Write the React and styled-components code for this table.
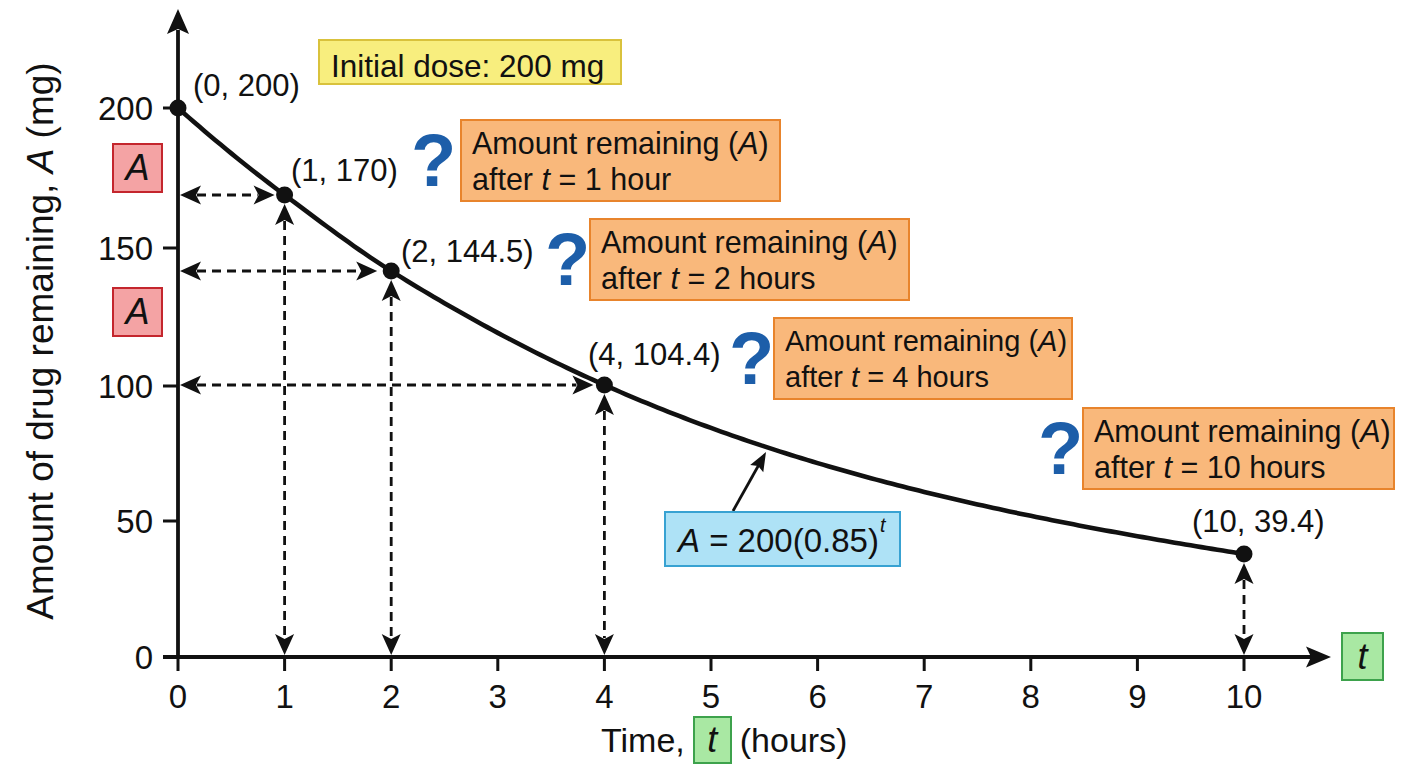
import React from 'react';
import styled, { createGlobalStyle } from 'styled-components';

const Global = createGlobalStyle`
  html, body { margin: 0; padding: 0; background: #ffffff; }
  body { font-family: "Liberation Sans", Arial, sans-serif; color: #111; }
`;

const tones = {
  orange: { bg: '#F9B87B', border: '#E8842C' },
  yellow: { bg: '#F8EE7E', border: '#D9C23C' },
  blue: { bg: '#AEE2F6', border: '#38A2D2' },
  red: { bg: '#F4A3A4', border: '#C4262D' },
  green: { bg: '#A9E8A3', border: '#3DA24C' },
};

const Figure = styled.div`
  position: relative;
  width: 1408px;
  height: 768px;
  overflow: hidden;
  background: #ffffff;
`;

const ChartSvg = styled.svg`
  display: block;
  width: 1408px;
  height: 768px;
  font-family: "Liberation Sans", Arial, sans-serif;
  fill: #111;
`;

const Placed = styled.div`
  position: absolute;
  left: ${(p) => p.$x}px;
  top: ${(p) => p.$y}px;
  display: flex;
  align-items: center;
  gap: ${(p) => p.$gap || 0}px;
`;

const Ask = styled.span`
  display: block;
  width: 40px;
  text-align: center;
  font-family: "Liberation Sans", Arial, sans-serif;
  font-weight: 700;
  font-size: 74px;
  line-height: 1;
  color: #1D5EA9;
`;

const Callout = styled.div`
  box-sizing: border-box;
  width: ${(p) => p.$w}px;
  height: 83px;
  padding: 0 10px;
  display: flex;
  flex-direction: column;
  justify-content: center;
  background: ${tones.orange.bg};
  border: 2px solid ${tones.orange.border};
  font-size: ${(p) => p.$size}px;
  line-height: 36px;
  white-space: nowrap;
  color: #111;
`;

const Badge = styled.div`
  box-sizing: border-box;
  width: ${(p) => p.$w}px;
  height: ${(p) => p.$h}px;
  padding: ${(p) => p.$pad || '0 12px'};
  display: flex;
  align-items: center;
  background: ${(p) => tones[p.$tone].bg};
  border: 2px solid ${(p) => tones[p.$tone].border};
  font-size: ${(p) => p.$size}px;
  white-space: nowrap;
  color: #111;
`;

const VarTag = styled.div`
  box-sizing: border-box;
  width: ${(p) => p.$w}px;
  height: ${(p) => p.$h}px;
  display: flex;
  align-items: center;
  justify-content: center;
  background: ${(p) => tones[p.$tone].bg};
  border: 2px solid ${(p) => tones[p.$tone].border};
  font-style: italic;
  font-size: ${(p) => p.$size}px;
  color: #111;
`;

const Var = styled.i`
  font-style: italic;
`;

const Sup = styled.i`
  font-style: italic;
  font-size: 0.6em;
  position: relative;
  top: -0.8em;
  margin-left: 1px;
`;

const AxisWord = styled.span`
  font-size: 34px;
  color: #111;
  white-space: nowrap;
`;

/* ---------- chart geometry ---------- */
const X = (t) => 178 + 106.6 * t;
const AXIS_Y = 657;
const yTicks = [
  { v: 200, y: 108 },
  { v: 150, y: 248 },
  { v: 100, y: 386 },
  { v: 50, y: 521 },
  { v: 0, y: 657 },
];
const xTicks = [0, 1, 2, 3, 4, 5, 6, 7, 8, 9, 10];

const points = [
  { t: 0, y: 108, label: '(0, 200)', lx: 193, ly: 96 },
  { t: 1, y: 195, label: '(1, 170)', lx: 291, ly: 181 },
  { t: 2, y: 271, label: '(2, 144.5)', lx: 401, ly: 262 },
  { t: 4, y: 385, label: '(4, 104.4)', lx: 588, ly: 365 },
  { t: 10, y: 554, label: '(10, 39.4)', lx: 1192, ly: 532 },
];

// exponential decay in screen space, nudged to pass through the plotted dots
const base = (t) => AXIS_Y - 549 * Math.pow(0.842, t);
const resid = points.map((p) => [p.t, p.y - base(p.t)]);
function correction(t) {
  for (let i = 0; i < resid.length - 1; i++) {
    const [t0, r0] = resid[i];
    const [t1, r1] = resid[i + 1];
    if (t >= t0 && t <= t1) {
      const u = (t - t0) / (t1 - t0);
      const s = u * u * (3 - 2 * u);
      return r0 + (r1 - r0) * s;
    }
  }
  return 0;
}
function curvePath() {
  let d = '';
  for (let i = 0; i <= 200; i++) {
    const t = (i / 200) * 10;
    const x = X(t);
    const y = base(t) + correction(t);
    d += `${i === 0 ? 'M' : 'L'}${x.toFixed(2)},${y.toFixed(2)} `;
  }
  return d;
}

function head(x, y, angle, len = 20, half = 8, notch = 4) {
  const c = Math.cos(angle);
  const s = Math.sin(angle);
  const bx = x - len * c;
  const by = y - len * s;
  const px = -s;
  const py = c;
  const nx = x - (len - notch) * c;
  const ny = y - (len - notch) * s;
  return `M${x},${y} L${bx + half * px},${by + half * py} L${nx},${ny} L${bx - half * px},${by - half * py} Z`;
}

function DashedArrow({ x1, y1, x2, y2 }) {
  const ang = Math.atan2(y2 - y1, x2 - x1);
  const len = 21;
  const c = Math.cos(ang);
  const s = Math.sin(ang);
  return (
    <g>
      <line
        x1={x1 + (len - 4) * c}
        y1={y1 + (len - 4) * s}
        x2={x2 - (len - 4) * c}
        y2={y2 - (len - 4) * s}
        stroke="#111"
        strokeWidth="2.8"
        strokeDasharray="9 6"
      />
      <path d={head(x1, y1, ang + Math.PI, len, 9.5, 5)} fill="#111" />
      <path d={head(x2, y2, ang, len, 9.5, 5)} fill="#111" />
    </g>
  );
}

const hArrows = [
  { y: 195, tip: X(1) - 10 },
  { y: 271, tip: X(2) - 14 },
  { y: 385, tip: X(4) - 11 },
];
const vArrows = [
  { x: X(1), top: 204 },
  { x: X(2), top: 280 },
  { x: X(4), top: 394 },
  { x: X(10), top: 563 },
];

const notes = [
  { qx: 411, bx: 460, y: 119, w: 321, size: 30.5, gap: 9, t: '1 hour' },
  { qx: 545, bx: 589, y: 218, w: 321, size: 30.5, gap: 4, t: '2 hours' },
  { qx: 729, bx: 773, y: 317, w: 300, size: 29, gap: 4, t: '4 hours' },
  { qx: 1038, bx: 1082, y: 407, w: 313, size: 30.5, gap: 4, t: '10 hours' },
];

export default function App() {
  const fA = Math.atan2(452 - 511, 766 - 733);
  return (
    <>
      <Global />
      <Figure>
        <ChartSvg viewBox="0 0 1408 768">
          {/* y-axis title */}
          <text
            transform="translate(53,341) rotate(-90)"
            textAnchor="middle"
            fontSize="37"
          >
            Amount of drug remaining, <tspan fontStyle="italic">A</tspan> (mg)
          </text>

          {/* axes */}
          <line x1="178" y1={AXIS_Y + 1} x2="178" y2="30" stroke="#111" strokeWidth="3.8" />
          <path d={head(178, 9, -Math.PI / 2, 25, 11, 5)} fill="#111" />
          <line x1="163" y1={AXIS_Y} x2="1312" y2={AXIS_Y} stroke="#111" strokeWidth="3.8" />
          <path d={head(1331, AXIS_Y, 0, 25, 10.5, 5)} fill="#111" />

          {/* y ticks */}
          {yTicks.map((tk) => (
            <g key={tk.v}>
              <line x1="163" y1={tk.y} x2="178" y2={tk.y} stroke="#111" strokeWidth="3" />
              <text x="153" y={tk.y + 12} textAnchor="end" fontSize="33">
                {tk.v}
              </text>
            </g>
          ))}

          {/* x ticks */}
          {xTicks.map((t) => (
            <g key={t}>
              <line x1={X(t)} y1={AXIS_Y} x2={X(t)} y2={AXIS_Y + 14} stroke="#111" strokeWidth="3" />
              <text x={X(t)} y="708" textAnchor="middle" fontSize="33">
                {t}
              </text>
            </g>
          ))}

          {/* dashed read-off arrows */}
          {hArrows.map((a) => (
            <DashedArrow key={a.y} x1={180} y1={a.y} x2={a.tip} y2={a.y} />
          ))}
          {vArrows.map((a) => (
            <DashedArrow key={a.x} x1={a.x} y1={a.top} x2={a.x} y2={AXIS_Y - 2} />
          ))}

          {/* decay curve */}
          <path d={curvePath()} fill="none" stroke="#111" strokeWidth="4.6" strokeLinecap="round" strokeLinejoin="round" />

          {/* formula pointer */}
          <line x1="733" y1="511" x2={766 - 14 * Math.cos(fA)} y2={452 - 14 * Math.sin(fA)} stroke="#111" strokeWidth="2.8" />
          <path d={head(766, 452, fA, 19, 7.5, 3)} fill="#111" />

          {/* points */}
          {points.map((p) => (
            <g key={p.t}>
              <circle cx={X(p.t)} cy={p.y} r="8.5" fill="#111" />
              <text x={p.lx} y={p.ly} fontSize="31">
                {p.label}
              </text>
            </g>
          ))}
        </ChartSvg>

        <Placed $x={318} $y={39}>
          <Badge $tone="yellow" $w={304} $h={46} $size={31.5} $pad="8px 11px 0">
            Initial dose: 200 mg
          </Badge>
        </Placed>

        <Placed $x={112} $y={143}>
          <VarTag $tone="red" $w={51} $h={50} $size={36}>A</VarTag>
        </Placed>
        <Placed $x={112} $y={287}>
          <VarTag $tone="red" $w={51} $h={50} $size={36}>A</VarTag>
        </Placed>

        {notes.map((n) => (
          <Placed key={n.t} $x={n.qx} $y={n.y} $gap={n.bx - n.qx - 40}>
            <Ask>?</Ask>
            <Callout $w={n.w} $size={n.size}>
              <div>
                Amount remaining (<Var>A</Var>)
              </div>
              <div>
                after <Var>t</Var> = {n.t}
              </div>
            </Callout>
          </Placed>
        ))}

        <Placed $x={664} $y={511}>
          <Badge $tone="blue" $w={237} $h={56} $size={33} $pad="4px 12px 0">
            <Var>A</Var>&nbsp;= 200(0.85)<Sup>t</Sup>
          </Badge>
        </Placed>

        <Placed $x={1341} $y={632}>
          <VarTag $tone="green" $w={43} $h={49} $size={36}>t</VarTag>
        </Placed>

        <Placed $x={601} $y={716} $gap={8}>
          <AxisWord>Time,</AxisWord>
          <VarTag $tone="green" $w={39} $h={48} $size={36}>t</VarTag>
          <AxisWord>(hours)</AxisWord>
        </Placed>
      </Figure>
    </>
  );
}
